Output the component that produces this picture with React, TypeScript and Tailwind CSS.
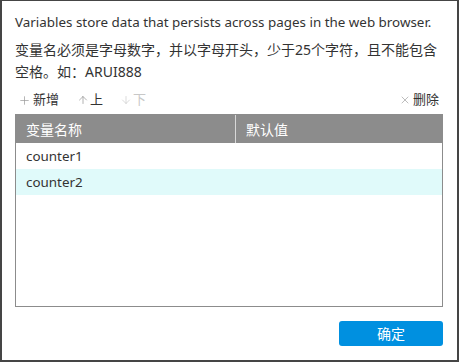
import { Plus, ArrowUp, ArrowDown, X } from 'lucide-react'

const rows = [
  { name: 'counter1', value: '', selected: false },
  { name: 'counter2', value: '', selected: true },
]

const font = { fontFamily: '"Noto Sans", "Noto Sans CJK SC", sans-serif' }

export default function App() {
  return (
    <div
      className="w-[459px] h-[362px] bg-white border-x-2 border-b-2 border-t border-[#454545] flex flex-col pt-[10px] pl-[13px] pr-[14px] text-[#333]"
      style={font}
    >
      <p className="text-[13.4px] leading-[22px] whitespace-nowrap">
        Variables store data that persists across pages in the web browser.
      </p>
      <p className="mt-[6px] text-[14px] leading-[22px]">
        变量名必须是字母数字，并以字母开头，少于25个字符，且不能包含空格。如：ARUI888
      </p>

      {/* Toolbar */}
      <div className="mt-[7px] h-[20px] flex items-center text-[13px] pl-[3px] pr-[4px]">
        <button className="flex items-center gap-[2px] text-[#333]">
          <Plus className="w-[13px] h-[13px] text-[#999]" strokeWidth={1.3} />
          新增
        </button>
        <button className="ml-[18px] flex items-center gap-[1px] text-[#333]">
          <ArrowUp className="w-[12px] h-[12px] text-[#888]" strokeWidth={1.3} />
          上
        </button>
        <button className="ml-[17px] flex items-center gap-[1px] text-[#c8c8c8]">
          <ArrowDown className="w-[12px] h-[12px]" strokeWidth={1.3} />
          下
        </button>
        <button className="ml-auto flex items-center gap-[2px] text-[#333]">
          <X className="w-[12px] h-[12px] text-[#999]" strokeWidth={1.3} />
          删除
        </button>
      </div>

      {/* Table */}
      <div className="mt-[4px] h-[193px] border border-[#8c8c8c] flex flex-col">
        <div className="h-[28px] bg-[#8c8c8c] flex items-center text-white text-[14px] shrink-0">
          <div className="w-[220px] h-full flex items-center pl-[10px] border-r border-[#d8d8d8]">变量名称</div>
          <div className="flex-1 pl-[10px]">默认值</div>
        </div>
        {rows.map((row) => (
          <div
            key={row.name}
            className={`h-[26px] flex items-center text-[13.4px] ${row.selected ? 'bg-[#e0fafa]' : 'bg-white'}`}
          >
            <div className="w-[220px] pl-[10px]">{row.name}</div>
            <div className="flex-1 pl-[10px]">{row.value}</div>
          </div>
        ))}
      </div>

      <div className="mt-[14px] flex justify-end">
        <button className="w-[104px] h-[25px] rounded-[3px] bg-[#0090e0] text-white text-[14px]">
          确定
        </button>
      </div>
    </div>
  )
}
